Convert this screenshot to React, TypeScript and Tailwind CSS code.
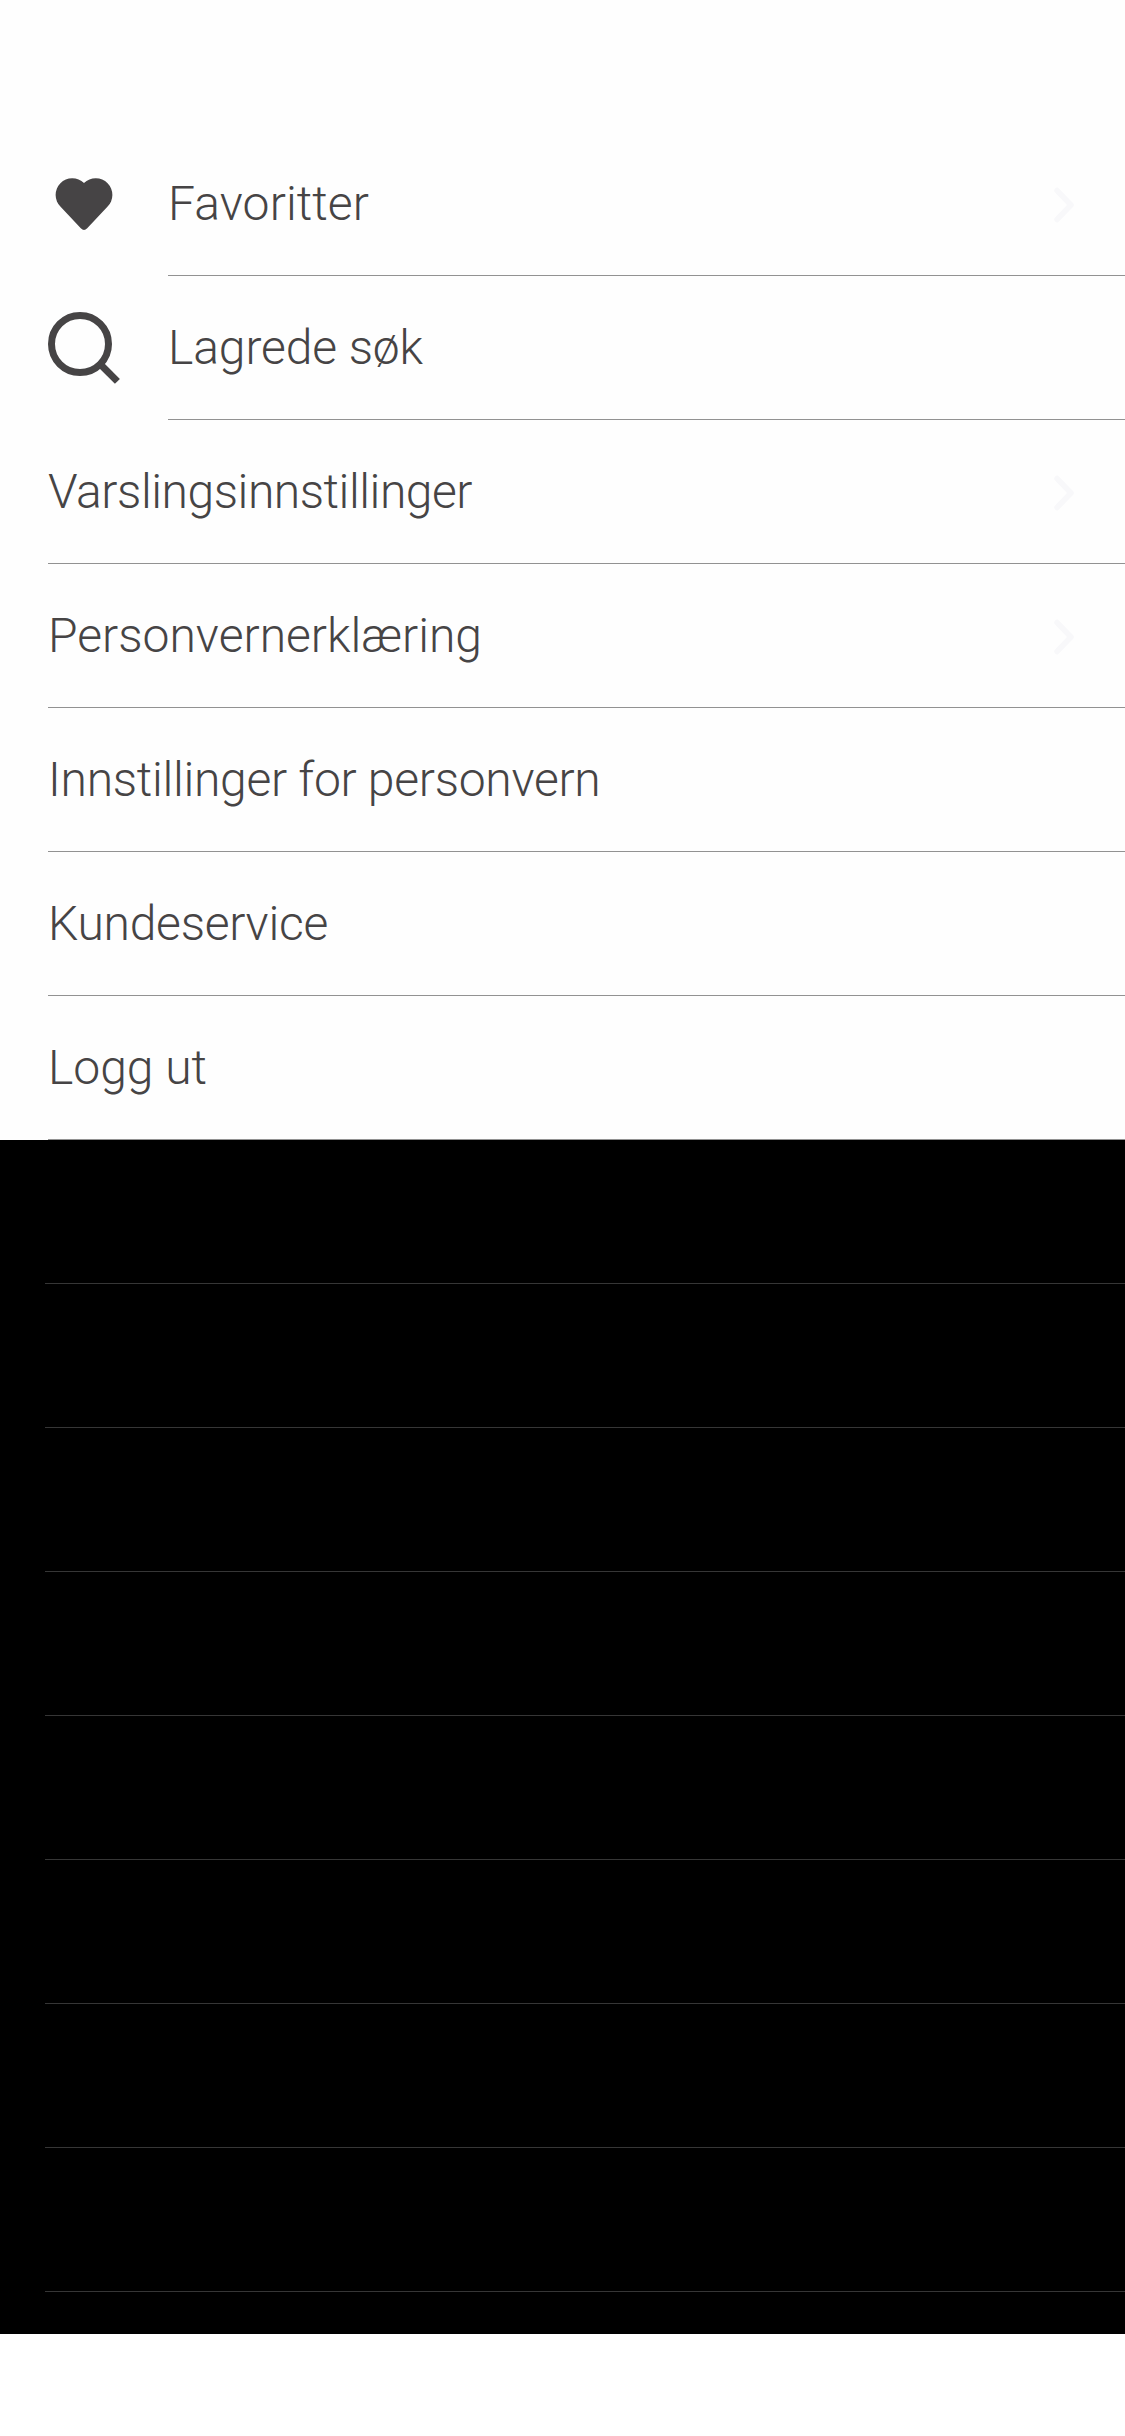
import type { ReactNode } from "react";

type Item = { label: string; tracking: string; icon?: ReactNode; chevron?: boolean };

function HeartIcon() {
  return (
    <svg viewBox="0 0 72 72" className="size-[72px] fill-[#464445]">
      <path d="M36 15A16.5 16.5 0 0 0 12.6 38.8L32.8 60.2Q36 63.6 39.2 60.2L59.4 38.8A16.5 16.5 0 0 0 36 15Z" />
    </svg>
  );
}

function SearchIcon() {
  return (
    <svg viewBox="0 0 72 72" className="size-[72px] fill-none stroke-[#464445] stroke-7">
      <circle cx="32" cy="32" r="28.5" />
      <path d="M52.5 52.5L69.4 69.4" />
    </svg>
  );
}

function Chevron() {
  return (
    <svg
      viewBox="0 0 20 36"
      className="mr-[51px] mt-0.5 h-9 w-5 fill-none stroke-[#f8f8fa] stroke-[5.5]"
      strokeLinecap="round"
      strokeLinejoin="round"
    >
      <path d="M3 3.5L17 18L3 32.5" />
    </svg>
  );
}

const items: Item[] = [
  { label: "Favoritter", tracking: "tracking-[0.1px]", icon: <HeartIcon />, chevron: true },
  { label: "Lagrede søk", tracking: "tracking-[-0.1px]", icon: <SearchIcon /> },
  { label: "Varslingsinnstillinger", tracking: "tracking-[-0.46px]", chevron: true },
  { label: "Personvernerklæring", tracking: "tracking-normal", chevron: true },
  { label: "Innstillinger for personvern", tracking: "tracking-[-0.28px]" },
  { label: "Kundeservice", tracking: "tracking-[-0.27px]" },
  { label: "Logg ut", tracking: "tracking-normal" },
];

function Row({ label, tracking, icon, chevron }: Item) {
  return (
    <li className="flex h-36 items-center pl-12">
      {icon && <span className="mr-12 shrink-0">{icon}</span>}
      <div className="flex h-full flex-1 items-center justify-between border-b border-[#929292]">
        <span className={`text-5xl font-[330] whitespace-nowrap ${tracking}`}>{label}</span>
        {chevron && <Chevron />}
      </div>
    </li>
  );
}

export default function App() {
  return (
    <div className="flex h-[2436px] w-[1125px] flex-col bg-white font-['Roboto',sans-serif] text-[#464445]">
      <ul className="bg-[#fefefe] pt-[132px]">
        {items.map((item) => (
          <Row key={item.label} {...item} />
        ))}
      </ul>
      <div className="h-[1194px] bg-black pl-[45px]">
        {Array.from({ length: 8 }, (_, i) => (
          <div key={i} className="h-36 border-b border-[#363636]" />
        ))}
      </div>
    </div>
  );
}
